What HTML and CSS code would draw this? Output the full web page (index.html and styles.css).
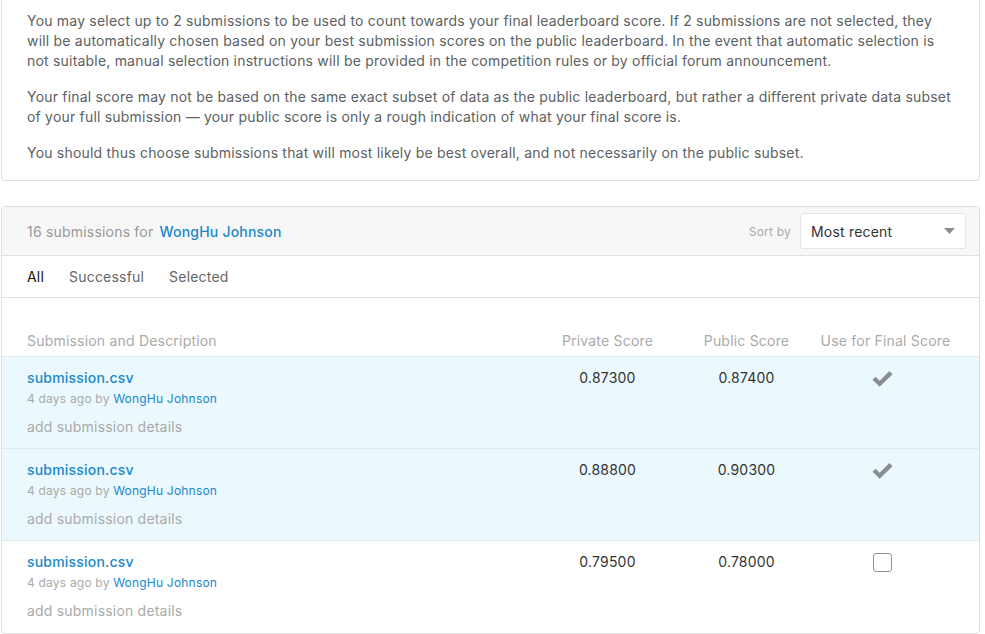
FILE: index.html
```html
<!DOCTYPE html>
<html>
<head>
<meta charset="utf-8">
<link rel="stylesheet" href="styles.css">
</head>
<body>
<div class="page">
  <div class="card info">
    <p>You may select up to 2 submissions to be used to count towards your final leaderboard score. If 2 submissions are not selected, they will be automatically chosen based on your best submission scores on the public leaderboard. In the event that automatic selection is not suitable, manual selection instructions will be provided in the competition rules or by official forum announcement.</p>
    <p>Your final score may not be based on the same exact subset of data as the public leaderboard, but rather a different private data subset of your full submission — your public score is only a rough indication of what your final score is.</p>
    <p>You should thus choose submissions that will most likely be best overall, and not necessarily on the public subset.</p>
  </div>

  <div class="card subs">
    <div class="subs-head">
      <div class="count">16 submissions for <a class="user">WongHu Johnson</a></div>
      <div class="sort">
        <span class="sort-label">Sort by</span>
        <div class="select">
          <span>Most recent</span>
          <svg width="11" height="6" viewBox="0 0 11 6"><path d="M0 0 H11 L5.5 6 Z" fill="#8c8c8c"/></svg>
        </div>
      </div>
    </div>
    <div class="tabs">
      <span class="tab active">All</span>
      <span class="tab">Successful</span>
      <span class="tab">Selected</span>
    </div>
    <div class="row header">
      <div>Submission and Description</div>
      <div class="c">Private Score</div>
      <div class="c">Public Score</div>
      <div class="c">Use for Final Score</div>
    </div>
    <div class="row sub selected">
      <div class="desc">
        <a class="file">submission.csv</a>
        <div class="meta">4 days ago by <a class="user">WongHu Johnson</a></div>
        <div class="details">add submission details</div>
      </div>
      <div class="c score">0.87300</div>
      <div class="c score">0.87400</div>
      <div class="c mark"><svg width="21" height="17" viewBox="0 0 20 16"><path d="M0.5 8.2 L3.4 5.3 L7.3 9.2 L16.6 0 L19.5 2.9 L7.3 15 Z" fill="#8a8e92"/></svg></div>
    </div>
    <div class="row sub selected">
      <div class="desc">
        <a class="file">submission.csv</a>
        <div class="meta">4 days ago by <a class="user">WongHu Johnson</a></div>
        <div class="details">add submission details</div>
      </div>
      <div class="c score">0.88800</div>
      <div class="c score">0.90300</div>
      <div class="c mark"><svg width="21" height="17" viewBox="0 0 20 16"><path d="M0.5 8.2 L3.4 5.3 L7.3 9.2 L16.6 0 L19.5 2.9 L7.3 15 Z" fill="#8a8e92"/></svg></div>
    </div>
    <div class="row sub">
      <div class="desc">
        <a class="file">submission.csv</a>
        <div class="meta">4 days ago by <a class="user">WongHu Johnson</a></div>
        <div class="details">add submission details</div>
      </div>
      <div class="c score">0.79500</div>
      <div class="c score">0.78000</div>
      <div class="c mark"><span class="checkbox"></span></div>
    </div>
  </div>
</div>
</body>
</html>
```

FILE: styles.css
```css
* { box-sizing: border-box; }
html, body { margin: 0; padding: 0; background: #fff; }
body {
  font-family: Inter, "Noto Sans", "Liberation Sans", sans-serif;
  font-size: 14px;
  letter-spacing: 0.2px;
  color: #5f6368;
}
.page {
  margin: 0 5px 0 1px;
  display: flex;
  flex-direction: column;
  gap: 25px;
}
.card {
  background: #fff;
  border: 1px solid #e0e0e0;
  border-radius: 4px;
}
.info {
  border-top: none;
  border-radius: 0 0 4px 4px;
  padding: 11px 23px 17px 25px;
}
.info p {
  margin: 0 0 16px;
  line-height: 20px;
  color: #5c5f63;
}
.info p:last-child { margin-bottom: 0; }

.subs { overflow: hidden; }
.subs-head {
  background: #f7f7f7;
  height: 49px;
  border-bottom: 1px solid #e0e0e0;
  display: flex;
  align-items: center;
  justify-content: space-between;
  padding: 0 13px 0 25px;
}
.count { color: #999; font-size: 14px; }
.user { color: #1a88c9; font-weight: 500; text-decoration: none; }
.count .user { margin-left: 2px; }
.sort { display: flex; align-items: center; gap: 9px; }
.sort-label { font-size: 12px; color: #aaa; }
.select {
  width: 166px;
  height: 36px;
  background: #fff;
  border: 1px solid #e6e6e6;
  border-radius: 3px;
  display: flex;
  align-items: center;
  justify-content: space-between;
  padding: 0 10px 0 10px;
  color: #333;
  font-size: 14px;
}
.tabs {
  height: 42px;
  border-bottom: 1px solid #e0e0e0;
  display: flex;
  align-items: center;
  gap: 25px;
  padding: 0 25px;
}
.tab { color: #666; font-size: 14px; }
.tab.active { color: #111; }

.row {
  display: grid;
  grid-template-columns: 1fr 139px 139px 139px;
  padding: 0 24px 0 25px;
}
.row .c { text-align: center; }
.header {
  padding-top: 33px;
  height: 59px;
  border-bottom: 1px solid #dde9ef;
  color: #aaa;
  line-height: 20px;
}
.sub {
  height: 92px;
  padding-top: 11px;
  border-bottom: 1px solid #dde9ef;
}
.sub:last-child { border-bottom: none; }
.sub.selected { background: #ebf8fe; }
.file {
  display: block;
  color: #1a88c9;
  font-weight: 500;
  line-height: 20px;
  text-decoration: none;
}
.meta {
  font-size: 12px;
  line-height: 18px;
  margin-top: 2px;
  color: #aaa;
}
.meta .user { font-weight: 400; }
.details {
  color: #aaa;
  line-height: 20px;
  margin-top: 9px;
}
.score { color: #333; line-height: 20px; }
.mark {
  display: flex;
  justify-content: center;
  padding-top: 3px;
}
.mark svg { margin-left: -6px; }
.checkbox {
  display: block;
  width: 19px;
  height: 19px;
  border: 1.5px solid #8e9297;
  border-radius: 3px;
  background: #fff;
  margin-left: -7px;
  margin-top: -2px;
}
```
